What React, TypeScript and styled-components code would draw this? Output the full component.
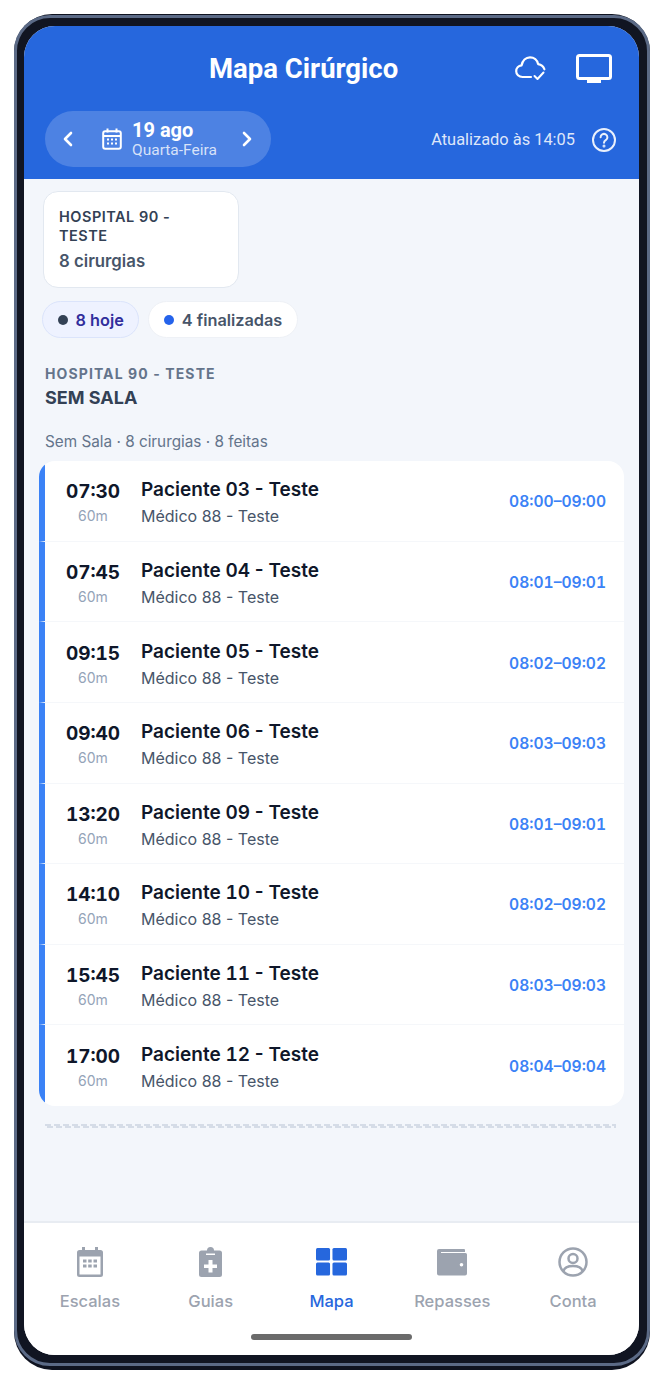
import React from 'react';
import styled, { createGlobalStyle } from 'styled-components';

const Global = createGlobalStyle`
  html, body { margin: 0; padding: 0; background: #fff; }
  * { box-sizing: border-box; }
`;

const Page = styled.div`
  width: 664px;
  height: 1384px;
  padding: 14px;
  overflow: hidden;
`;
const Device = styled.div`
  width: 636px;
  height: 1356px;
  background: #0f1320;
  border-radius: 38px;
  padding-top: 1px;
`;
const Bezel = styled.div`
  height: 1351px;
  background: #111522;
  border-radius: 36px;
  border: 3px solid #5b6a86;
  padding: 8px 8px 8px 7px;
`;
const Screen = styled.div`
  width: 615px;
  height: 1329px;
  border-radius: 31px;
  overflow: hidden;
  background: #f3f6fb;
  display: flex;
  flex-direction: column;
`;
const Header = styled.header`
  background: #2667dd;
  height: 153px;
  flex: none;
  padding: 0 23px 0 21px;
  display: flex;
  flex-direction: column;
`;
const TitleRow = styled.div`
  height: 85px;
  display: flex;
  align-items: center;
  padding: 0 4px 0 0;
`;
const Title = styled.h1`
  margin: 0 0 0 164px;
  flex: 1;
  font: 700 27.5px/32px Roboto, sans-serif;
  color: #fff;
`;
const TopIcons = styled.div`
  display: flex;
  align-items: center;
  gap: 30px;
`;
const DateRow = styled.div`
  display: flex;
  align-items: center;
  justify-content: space-between;
`;
const DatePill = styled.div`
  width: 226px;
  height: 56px;
  border-radius: 28px;
  background: rgba(255, 255, 255, 0.18);
  display: flex;
  align-items: center;
  padding: 0 12px 0 11px;
  color: #fff;
`;
const PillGap = styled.span`
  width: 22px;
  flex: none;
`;
const DateText = styled.div`
  display: flex;
  flex-direction: column;
  margin-left: 10px;
  flex: 1;
`;
const DateMain = styled.span`
  font: 700 20px/21px Roboto, sans-serif;
`;
const DateSub = styled.span`
  font: 400 15.5px/18px Roboto, sans-serif;
  color: rgba(255, 255, 255, 0.78);
`;
const Updated = styled.div`
  display: flex;
  align-items: center;
  gap: 17px;
  padding-top: 1px;
  font: 400 16.4px/20px Roboto, sans-serif;
  color: rgba(255, 255, 255, 0.86);
`;
const Body = styled.main`
  flex: 1;
  padding: 12px 15px 0 15px;
  display: flex;
  flex-direction: column;
`;
const HospitalCard = styled.div`
  width: 196px;
  margin-left: 4px;
  height: 97px;
  padding: 15px 15px 0;
  background: #fff;
  border: 1.5px solid #e2e8f0;
  border-radius: 15px;
`;
const HospitalName = styled.div`
  font: 600 14.5px/19px Inter, sans-serif;
  letter-spacing: 0.5px;
  color: #334155;
`;
const HospitalCount = styled.div`
  margin-top: 6px;
  font: 600 16.8px/20px Inter, sans-serif;
  color: #475569;
`;
const Chips = styled.div`
  display: flex;
  gap: 9px;
  margin: 13px 0 0 3px;
`;
const Chip = styled.div<{ $active?: boolean }>`
  height: 37px;
  padding: 0 14.5px;
  border-radius: 19px;
  display: flex;
  align-items: center;
  gap: 8px;
  font: 600 16.3px/20px Inter, sans-serif;
  background: ${p => (p.$active ? '#eef2ff' : '#fff')};
  border: 1px solid ${p => (p.$active ? '#dbe4fb' : '#eef1f6')};
  color: ${p => (p.$active ? '#312e9c' : '#475569')};
`;
const Dot = styled.span<{ $color: string }>`
  width: 10px;
  height: 10px;
  border-radius: 50%;
  background: ${p => p.$color};
`;
const SectionEyebrow = styled.div`
  margin: 27px 0 0 6px;
  font: 700 14px/18px Inter, sans-serif;
  letter-spacing: 1.1px;
  color: #64748b;
`;
const SectionTitle = styled.div`
  margin: 3px 0 0 6px;
  font: 700 18px/24px Inter, sans-serif;
  color: #334155;
`;
const SectionMeta = styled.div`
  margin: 22px 0 0 6px;
  font: 400 15.3px/20px Inter, sans-serif;
  color: #64748b;
`;
const List = styled.div`
  margin-top: 9px;
  width: 585px;
  background: #fff;
  border-radius: 16px;
  overflow: hidden;
`;
const Row = styled.div`
  height: 80.625px;
  padding-top: 5px;
  display: flex;
  align-items: center;
  border-left: 6px solid #3b82f6;
  border-bottom: 1px solid #f5f7fa;
  &:last-child { border-bottom: 0; }
`;
const TimeCol = styled.div`
  width: 96px;
  flex: none;
  display: flex;
  flex-direction: column;
  align-items: center;
`;
const Time = styled.span`
  font: 700 19px/26px Inter, sans-serif;
  font-variant-numeric: tabular-nums;
  color: #0f172a;
`;
const Duration = styled.span`
  font: 400 14px/22px Inter, sans-serif;
  color: #94a3b8;
`;
const Patient = styled.div`
  flex: 1;
  display: flex;
  flex-direction: column;
`;
const PatientName = styled.span`
  font: 600 19px/26px Inter, sans-serif;
  color: #0f172a;
`;
const PatientNumber = styled.span`
  font-variant-numeric: tabular-nums;
`;
const Doctor = styled.span`
  font: 400 16px/26px Inter, sans-serif;
  color: #475569;
`;
const Range = styled.span`
  font: 600 15.6px/20px Inter, sans-serif;
  font-variant-numeric: tabular-nums;
  color: #3b82f6;
  margin: 0 18px 2px 0;
`;
const Dashes = styled.div`
  margin: 18px 8px 0 6px;
  height: 4px;
  background:
    repeating-linear-gradient(90deg, #d5dce7 0 6px, transparent 6px 9px) 0 0 / 100% 2px no-repeat,
    repeating-linear-gradient(90deg, transparent 0 2px, #d5dce7 2px 8px, transparent 8px 9px) 0 2px / 100% 2px no-repeat;
`;
const TabBar = styled.nav`
  flex: none;
  height: 134px;
  background: #fff;
  border-top: 2px solid #e8ecf2;
  padding: 0 5.5px;
  position: relative;
  display: grid;
  grid-template-columns: repeat(5, 1fr);
`;
const Tab = styled.div<{ $active?: boolean }>`
  display: flex;
  flex-direction: column;
  align-items: center;
  padding-top: 22px;
  font: 450 16.5px/20px Inter, sans-serif;
  color: ${p => (p.$active ? '#2667dd' : '#9ca3af')};
`;
const TabIcon = styled.div`
  height: 34px;
  margin-bottom: 12px;
  display: flex;
  align-items: center;
`;
const HomeIndicator = styled.div`
  position: absolute;
  left: 227px;
  bottom: 15px;
  width: 161px;
  height: 6px;
  border-radius: 3px;
  background: #6b6b6b;
`;

const CalendarOutline = () => (
  <svg width="20" height="22" viewBox="0 0 20 22" fill="none" stroke="#fff" strokeWidth="2">
    <rect x="1.2" y="3.2" width="17.6" height="17.6" rx="2" />
    <path d="M1.5 8h17M5.5 0.5v4M14.5 0.5v4" />
    <path d="M5 11.5h2M9 11.5h2M13 11.5h2M5 15.5h2M9 15.5h2M13 15.5h2" strokeWidth="1.8" />
  </svg>
);
const Chevron = ({ dir }: { dir: 'l' | 'r' }) => (
  <svg width="24" height="24" viewBox="0 0 24 24" fill="none" stroke="#fff" strokeWidth="2.6" strokeLinecap="round" strokeLinejoin="round">
    <path d={dir === 'l' ? 'M15 6l-6 6 6 6' : 'M9 6l6 6-6 6'} />
  </svg>
);
const CloudCheck = () => (
  <svg width="31" height="26" viewBox="0 0 31 26" fill="none" stroke="#fff" strokeWidth="2.2" strokeLinecap="round" strokeLinejoin="round">
    <path d="M16 21H7.500C3.800 21 1.200 18.300 1.200 15.200c0-3 2.200-5.600 5.400-5.900C7.500 4.700 10.700 1.300 15 1.300c4 0 7.300 2.800 8.100 6.800 3 .4 5.500 2.400 6.300 5.200" />
    <path d="M19.500 20l3 3 6-6.500" strokeWidth="2" />
  </svg>
);
const Monitor = () => (
  <svg width="36" height="30" viewBox="0 0 36 30" fill="none">
    <rect x="1.5" y="1.5" width="33" height="23" rx="2" stroke="#fff" strokeWidth="3" />
    <rect x="11" y="25" width="14" height="4" fill="#fff" />
  </svg>
);
const Help = () => (
  <svg width="24" height="24" viewBox="0 0 24 24" fill="none" stroke="#fff" strokeOpacity="0.9" strokeWidth="2" strokeLinecap="round">
    <circle cx="12" cy="12" r="11" />
    <path d="M8.600 9.300a3.400 3.400 0 1 1 5.200 2.900c-1.100.7-1.800 1.400-1.800 2.600" />
    <circle cx="12" cy="18" r="0.500" fill="#fff" />
  </svg>
);
const CalendarFill = () => (
  <svg width="26" height="30" viewBox="0 0 26 30">
    <path fill="#9ca3af" fillRule="evenodd" d="M5 0h3v3h10V0h3v3h2.500A2.500 2.500 0 0 1 26 5.500v22a2.500 2.500 0 0 1-2.500 2.500h-21A2.500 2.500 0 0 1 0 27.500v-22A2.500 2.500 0 0 1 2.500 3H5zM2.500 9.500v18h21v-18zM6 12.500h3.500v3H6zM11.200 12.500h3.500v3h-3.500zM16.500 12.500H20v3h-3.500zM6 17.500h3.500v3H6zM11.200 17.500h3.500v3h-3.500zM16.500 17.500H20v3h-3.500z" />
  </svg>
);
const Clipboard = () => (
  <svg width="23" height="30" viewBox="0 0 23 30">
    <path fill="#9ca3af" fillRule="evenodd" d="M8 3.500a3.500 3.500 0 0 1 7 0h5.500A2.500 2.500 0 0 1 23 6v21.500a2.500 2.500 0 0 1-2.500 2.500h-18A2.500 2.500 0 0 1 0 27.500V6a2.500 2.500 0 0 1 2.500-2.500zM7 6.500v1.500h9V6.500zM9.500 13v4.500H5V21h4.500v4.500h4V21H18v-3.500h-4.500V13z" />
  </svg>
);
const GridMap = () => (
  <svg width="31" height="28" viewBox="0 0 32 28" fill="#2667dd" preserveAspectRatio="none">
    <rect x="0" y="0" width="14.500" height="12.500" rx="1.500" />
    <rect x="17" y="0" width="15" height="12.500" rx="1.500" />
    <rect x="0" y="14.500" width="14.500" height="13" rx="1.500" />
    <rect x="17" y="14.500" width="15" height="13" rx="1.500" />
  </svg>
);
const Wallet = () => (
  <svg width="30" height="27" viewBox="0 0 30 27">
    <path fill="#9ca3af" fillRule="evenodd" d="M2 0h25a1 1 0 0 1 1 1v2H4v1h24.500A1.500 1.500 0 0 1 30 5.500v19a2 2 0 0 1-2 2H2a2 2 0 0 1-2-2V2a2 2 0 0 1 2-2zM24.500 14a1.800 1.800 0 1 0 0 3.600 1.800 1.800 0 0 0 0-3.600z" />
  </svg>
);
const Account = () => (
  <svg width="30" height="30" viewBox="0 0 30 30" fill="none" stroke="#9ca3af" strokeWidth="2.500">
    <circle cx="15" cy="15" r="13.500" />
    <circle cx="15" cy="11.500" r="4.500" />
    <path d="M5.500 24c1-3.500 4-5 9.500-5s8.500 1.500 9.500 5" />
  </svg>
);

const rows = [
  ['07:30', '03', '08:00–09:00'],
  ['07:45', '04', '08:01–09:01'],
  ['09:15', '05', '08:02–09:02'],
  ['09:40', '06', '08:03–09:03'],
  ['13:20', '09', '08:01–09:01'],
  ['14:10', '10', '08:02–09:02'],
  ['15:45', '11', '08:03–09:03'],
  ['17:00', '12', '08:04–09:04'],
];

export default function App() {
  return (
    <Page>
      <Global />
      <Device>
        <Bezel>
          <Screen>
            <Header>
              <TitleRow>
                <Title>Mapa Cirúrgico</Title>
                <TopIcons>
                  <CloudCheck />
                  <Monitor />
                </TopIcons>
              </TitleRow>
              <DateRow>
                <DatePill>
                  <Chevron dir="l" />
                  <PillGap />
                  <CalendarOutline />
                  <DateText>
                    <DateMain>19 ago</DateMain>
                    <DateSub>Quarta-Feira</DateSub>
                  </DateText>
                  <Chevron dir="r" />
                </DatePill>
                <Updated>
                  Atualizado às 14:05
                  <Help />
                </Updated>
              </DateRow>
            </Header>
            <Body>
              <HospitalCard>
                <HospitalName>HOSPITAL 90 -<br />TESTE</HospitalName>
                <HospitalCount>8 cirurgias</HospitalCount>
              </HospitalCard>
              <Chips>
                <Chip $active><Dot $color="#334155" />8 hoje</Chip>
                <Chip><Dot $color="#2563eb" />4 finalizadas</Chip>
              </Chips>
              <SectionEyebrow>HOSPITAL 90 - TESTE</SectionEyebrow>
              <SectionTitle>SEM SALA</SectionTitle>
              <SectionMeta>Sem Sala · 8 cirurgias · 8 feitas</SectionMeta>
              <List>
                {rows.map(([t, n, r]) => (
                  <Row key={t}>
                    <TimeCol>
                      <Time>{t}</Time>
                      <Duration>60m</Duration>
                    </TimeCol>
                    <Patient>
                      <PatientName>Paciente <PatientNumber>{n}</PatientNumber> - Teste</PatientName>
                      <Doctor>Médico 88 - Teste</Doctor>
                    </Patient>
                    <Range>{r}</Range>
                  </Row>
                ))}
              </List>
              <Dashes />
            </Body>
            <TabBar>
              <Tab><TabIcon><CalendarFill /></TabIcon>Escalas</Tab>
              <Tab><TabIcon><Clipboard /></TabIcon>Guias</Tab>
              <Tab $active><TabIcon><GridMap /></TabIcon>Mapa</Tab>
              <Tab><TabIcon><Wallet /></TabIcon>Repasses</Tab>
              <Tab><TabIcon><Account /></TabIcon>Conta</Tab>
              <HomeIndicator />
            </TabBar>
          </Screen>
        </Bezel>
      </Device>
    </Page>
  );
}
